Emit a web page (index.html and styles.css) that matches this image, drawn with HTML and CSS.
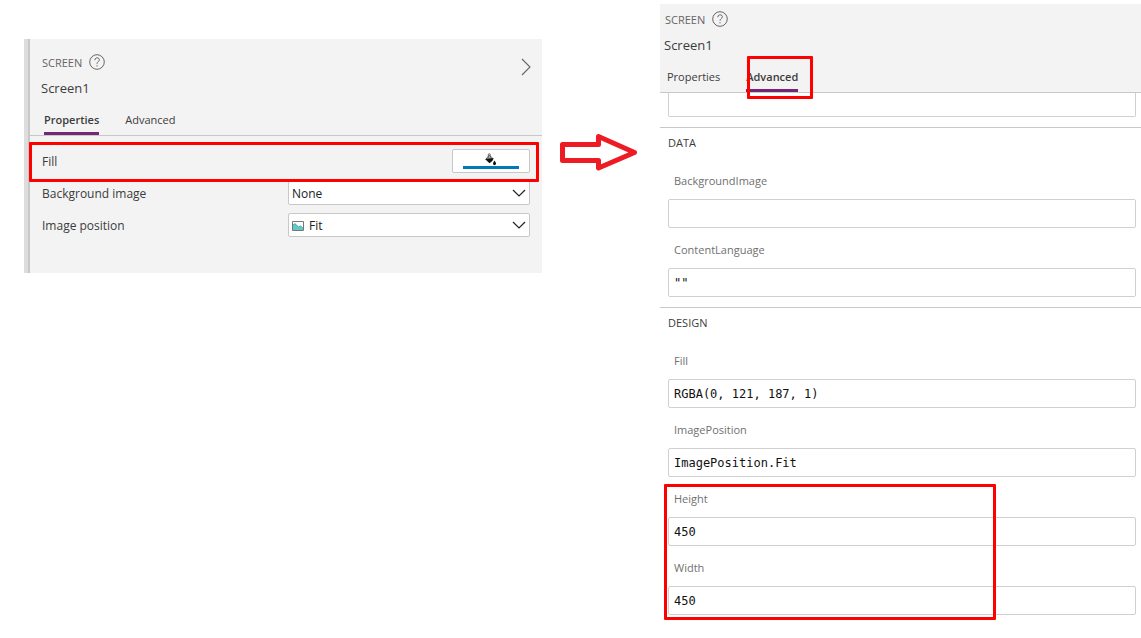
FILE: index.html
```html
<!DOCTYPE html>
<html lang="en">
<head>
<meta charset="utf-8">
<title>Screen properties</title>
<link rel="stylesheet" href="styles.css">
</head>
<body>
<main class="board">
  <section class="panel panel-properties">
    <header class="panel-header">
      <div class="kind">SCREEN
        <button class="icon-button" type="button" aria-label="Help"><svg width="16" height="16" viewBox="0 0 16 16" fill="none" stroke="#666"><circle cx="8" cy="8" r="7.3"/><path d="M5.8 6.2C5.8 3 10.4 3.2 10.4 5.8C10.4 7.6 8 7.7 8 9.8M8 11.2V12.4"/></svg></button>
        <button class="icon-button collapse" type="button" aria-label="Collapse"><svg width="10" height="18" viewBox="0 0 10 18" fill="none" stroke="#666" stroke-width="1.1"><path d="M1 1L9 9L1 17"/></svg></button>
      </div>
      <h1 class="name">Screen1</h1>
      <nav class="tabs">
        <button class="tab active" type="button">Properties</button>
        <button class="tab" type="button">Advanced</button>
      </nav>
    </header>
    <div class="rows">
      <div class="row marked">
        <label for="fill-color">Fill</label>
        <button class="color-button" id="fill-color" type="button" aria-label="Fill color">
          <svg width="14" height="13" viewBox="0 0 14 13"><path d="M2 6L5.3 2.2L8.8 5.4Z" fill="#ddd" stroke="#444" stroke-width=".8"/><path d="M4.3 5V1.2Q5.3 0 6.2 1.2V5" fill="none" stroke="#444" stroke-width=".8"/><path d="M1 6L9.8 5.2L8.3 8L5.5 10.2Z" fill="#111"/><path d="M10.5 7.4Q12.2 9.6 12.1 10.6Q11.8 12.2 10.5 12.2Q9.1 12.2 9 10.6Q8.9 9.6 10.5 7.4Z" fill="#111"/></svg>
          <span class="swatch"></span>
        </button>
        <span class="highlight highlight-row"></span>
      </div>
      <div class="row">
        <label for="bg-image">Background image</label>
        <div class="select-wrap">
          <select id="bg-image"><option>None</option></select>
          <svg class="chevron" width="14" height="8" viewBox="0 0 14 8" fill="none" stroke="#222" stroke-width="1.2"><path d="M1 1L7 7L13 1"/></svg>
        </div>
      </div>
      <div class="row">
        <label for="img-position">Image position</label>
        <div class="select-wrap">
          <select id="img-position" class="with-icon"><option>Fit</option></select>
          <svg class="picture" width="12" height="10" viewBox="0 0 12 10"><path d="M.5 .5H11.5V9.5H.5Z" fill="#fff" stroke="#777"/><path d="M1 4L3 2.6L6.5 6L8.5 5L11 7V9H1Z" fill="#5fcaca"/><path d="M1 4L3 2.6L6.5 6L8.5 5L11 7" fill="none" stroke="#268f92" stroke-width=".7"/></svg>
          <svg class="chevron" width="14" height="8" viewBox="0 0 14 8" fill="none" stroke="#222" stroke-width="1.2"><path d="M1 1L7 7L13 1"/></svg>
        </div>
      </div>
    </div>
  </section>

  <svg class="arrow" width="78" height="38" viewBox="0 0 78 38" fill="none" stroke="#ed1c24" stroke-width="5" stroke-linejoin="round"><path d="M2.5 11.5H38.5V3.5L74.5 19.5L38.5 35V27.5H2.5Z"/></svg>

  <section class="panel panel-advanced">
    <header class="panel-header">
      <div class="kind">SCREEN
        <button class="icon-button" type="button" aria-label="Help"><svg width="16" height="16" viewBox="0 0 16 16" fill="none" stroke="#666"><circle cx="8" cy="8" r="7.3"/><path d="M5.8 6.2C5.8 3 10.4 3.2 10.4 5.8C10.4 7.6 8 7.7 8 9.8M8 11.2V12.4"/></svg></button>
      </div>
      <h1 class="name">Screen1</h1>
      <nav class="tabs">
        <button class="tab" type="button">Properties</button>
        <button class="tab active marked" type="button">Advanced<span class="highlight highlight-tab"></span></button>
      </nav>
    </header>
    <div class="group">
      <input class="formula clipped" type="text" aria-label="Action">
    </div>
    <div class="group">
      <h2 class="group-title">DATA</h2>
      <div class="field"><label for="f-bg">BackgroundImage</label><input class="formula" id="f-bg" type="text"></div>
      <div class="field"><label for="f-lang">ContentLanguage</label><input class="formula" id="f-lang" type="text" value='""'></div>
    </div>
    <div class="group">
      <h2 class="group-title">DESIGN</h2>
      <div class="field"><label for="f-fill">Fill</label><input class="formula" id="f-fill" type="text" value="RGBA(0, 121, 187, 1)"></div>
      <div class="field"><label for="f-pos">ImagePosition</label><input class="formula" id="f-pos" type="text" value="ImagePosition.Fit"></div>
      <div class="marked">
        <div class="field"><label for="f-h">Height</label><input class="formula" id="f-h" type="text" value="450"></div>
        <div class="field"><label for="f-w">Width</label><input class="formula" id="f-w" type="text" value="450"></div>
        <span class="highlight highlight-size"></span>
      </div>
    </div>
  </section>
</main>
</body>
</html>
```
FILE: styles.css
```css
* { box-sizing: border-box; }

body {
  margin: 0;
  background: #fff;
  color: #3c3c3c;
  font-family: "Open Sans", "Noto Sans", sans-serif;
  font-size: 12px;
}

button, select, input { font: inherit; color: inherit; }

.board {
  display: grid;
  grid-template-columns: 518fr 118px 481fr;
  align-items: start;
  padding: 4px 0 0 24px;
}

.panel-properties {
  margin-top: 35px;
  background: #f3f3f3;
  border-left: 4px solid #ddd;
  box-shadow: inset 2px 0 #c8c8c8;
  padding-left: 2px;
}

.panel-header {
  padding: 13px 11px 0;
  background: #f3f3f3;
  border-bottom: 1px solid #c8c8c8;
}

.panel-advanced .panel-header { padding: 5px 4px 0; }

.kind {
  display: flex;
  align-items: center;
  gap: 7px;
  height: 20px;
  padding-left: 1px;
  color: #666;
  font-size: 11px;
}

.icon-button {
  display: flex;
  padding: 0;
  border: 0;
  background: none;
}

.collapse { margin: 10px 0 0 auto; }

.name {
  margin: 4px 0 8px;
  font-size: 13px;
  font-weight: 400;
  line-height: 24px;
}

.tabs {
  display: flex;
  gap: 26px;
  padding-left: 3px;
}

.tab {
  padding: 0;
  border: 0;
  border-bottom: 3px solid transparent;
  background: none;
  font-size: 11px;
  line-height: 24px;
}

.tab.active {
  border-bottom-color: #742774;
  font-weight: 600;
}

.rows { padding: 9px 12px 32px; }

.row {
  display: flex;
  align-items: center;
  justify-content: space-between;
  height: 32px;
}

.color-button {
  display: flex;
  flex-direction: column;
  align-items: center;
  justify-content: center;
  width: 78px;
  height: 24px;
  padding: 0 10px;
  border: 1px solid #c8c8c8;
  border-radius: 2px;
  background: #fff;
}

.swatch {
  width: 100%;
  height: 3px;
  background: #0079bb;
}

.select-wrap {
  position: relative;
  width: 242px;
}

.select-wrap select {
  display: block;
  width: 100%;
  height: 24px;
  padding: 0 24px 0 3px;
  border: 1px solid #c8c8c8;
  border-radius: 2px;
  background: #fff;
  color: #222;
  appearance: none;
}

.select-wrap select.with-icon { padding-left: 20px; }

.chevron {
  position: absolute;
  top: 8px;
  right: 4px;
  pointer-events: none;
}

.picture {
  position: absolute;
  top: 8px;
  left: 4px;
  pointer-events: none;
}

.arrow { margin: 129px 0 0 18px; }

.group {
  padding: 0 5px 10px 8px;
  border-bottom: 1px solid #c8c8c8;
}

.group:last-child { border-bottom: 0; }

.group-title {
  margin: 0;
  padding-bottom: 2px;
  font-size: 11px;
  font-weight: 400;
  line-height: 29px;
}

.field { padding-top: 12px; }

.field label {
  display: block;
  margin-bottom: 8px;
  padding-left: 6px;
  color: #707070;
  font-size: 11px;
  line-height: 20px;
}

.formula {
  display: block;
  width: 100%;
  height: 29px;
  padding: 1px 5px 0;
  border: 1px solid #d0d0d0;
  border-radius: 2px;
  background: #fff;
  color: #111;
  font-family: "DejaVu Sans Mono", "Liberation Mono", monospace;
}

.formula.clipped {
  height: 24px;
  border-top: 0;
  border-radius: 0 0 2px 2px;
}

.marked { position: relative; }

.highlight {
  position: absolute;
  z-index: 1;
  border: 3px solid #f00;
  border-radius: 1px;
  pointer-events: none;
}

.highlight-row { inset: -3px -9px -5px -13px; }
.highlight-tab { inset: -9px -15px -10px 1px; }
.highlight-size { inset: 7px 140px -5px -4px; }
```
